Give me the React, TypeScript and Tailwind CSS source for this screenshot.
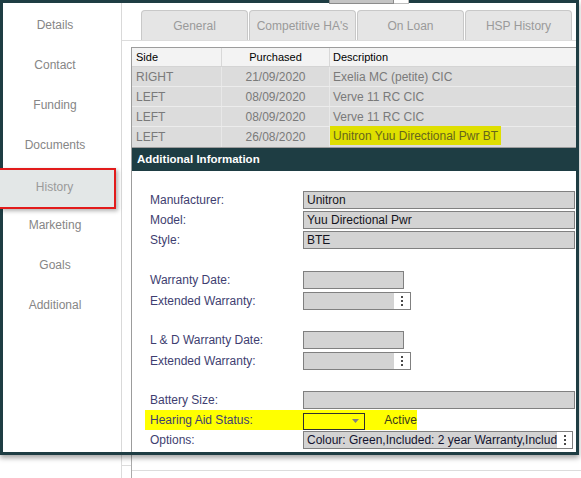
import React from 'react';

const sideItems = ['Details', 'Contact', 'Funding', 'Documents', 'History', 'Marketing', 'Goals', 'Additional'];
const tabs = ['General', "Competitive HA's", 'On Loan', 'HSP History'];

const rows = [
    { side: 'RIGHT', date: '21/09/2020', desc: 'Exelia MC (petite) CIC' },
    { side: 'LEFT', date: '08/09/2020', desc: 'Verve 11 RC CIC' },
    { side: 'LEFT', date: '08/09/2020', desc: 'Verve 11 RC CIC' },
    { side: 'LEFT', date: '26/08/2020', desc: 'Unitron Yuu Directional Pwr BT', hi: true },
];

function Kebab() {
    return (
        <svg width="4" height="12" viewBox="0 0 4 12" className="shrink-0">
            <rect x="1" y="1" width="2" height="2" fill="#4a4a4a" />
            <rect x="1" y="5" width="2" height="2" fill="#4a4a4a" />
            <rect x="1" y="9" width="2" height="2" fill="#4a4a4a" />
        </svg>
    );
}

function Field({ value = '', className = '' }: { value?: string; className?: string }) {
    return (
        <div className={`h-[18px] border border-[#808080] bg-[#d3d3d3] pl-[3px] flex items-center text-[12px] text-[#141420] leading-none overflow-hidden whitespace-nowrap ${className}`}>
            {value}
        </div>
    );
}

function MenuField({ value = '', className = '', grey }: { value?: string; className?: string; grey: string }) {
    return (
        <div className={`h-[18px] border border-[#808080] bg-white flex ${className}`}>
            <div className={`${grey} h-full bg-[#d3d3d3] pl-[3px] flex items-center text-[12px] text-[#141430] leading-none overflow-hidden whitespace-nowrap`}>
                {value}
            </div>
            <div className="flex-1 flex items-center justify-center">
                <Kebab />
            </div>
        </div>
    );
}

function Row({ label, children, className = '' }: { label: string; children: React.ReactNode; className?: string }) {
    return (
        <div className={`h-[20px] flex items-center ${className}`}>
            <div className="w-[153px] text-[12px] text-[#3e3e70]">{label}</div>
            {children}
        </div>
    );
}

export default function App() {
    return (
        <div className="relative w-[581px] h-[478px] bg-white overflow-hidden font-['Liberation_Sans',Arial,sans-serif]">
            <div className="relative z-10 flex w-[579px] h-[455px] border-[3px] border-[#1e3d43] bg-white shadow-[0_3px_5px_rgba(0,0,0,0.35)]">
                {/* sidebar */}
                <div className="w-[119px] border-r border-[#d9d9d9] pt-[2px] flex flex-col">
                    {sideItems.map((item) =>
                        item === 'History' ? (
                            <div
                                key={item}
                                className="relative z-10 -ml-[3px] mt-[3px] -mb-[4px] w-[116px] h-[41px] border-2 border-l-0 border-[#e21b1b] bg-[#e3e7e7] shadow-[2px_2px_4px_rgba(0,0,0,0.3)] flex items-center justify-center pr-[5px] pb-[3px] text-[12px] text-[#9a9a9a]"
                            >
                                {item}
                            </div>
                        ) : (
                            <div key={item} className="w-[104px] h-10 flex items-center justify-center text-[12px] text-[#868686]">
                                {item}
                            </div>
                        )
                    )}
                </div>

                {/* main */}
                <div className="flex-1 flex flex-col min-w-0">
                    <div className="h-[38px] border-b border-[#dcdcdc] pt-[7px] pl-[19px] flex gap-[1px]">
                        {tabs.map((t) => (
                            <div key={t} className="w-[107px] h-[30px] rounded-t-[4px] border border-b-0 border-[#c8c8c8] bg-[#e5e5e5] flex items-center justify-center text-[12px] text-[#9a9a9a]">
                                {t}
                            </div>
                        ))}
                    </div>

                    <div className="flex-1 pl-[9px] pt-[6px] flex flex-col min-h-0">
                        <div className="flex-1 border-l border-t border-[#9c9c9c] flex flex-col">
                            {/* table */}
                            <div className="h-[19px] flex bg-[#f3f3f3] border-b border-[#d4d4d4] text-[11px] text-black">
                                <div className="w-[90px] border-r border-[#d8d8d8] pl-[4px] flex items-center">Side</div>
                                <div className="w-[108px] border-r border-[#d8d8d8] flex items-center justify-center">Purchased</div>
                                <div className="flex-1 pl-[3px] flex items-center">Description</div>
                            </div>
                            {rows.map((r, i) => (
                                <div
                                    key={i}
                                    className={`flex bg-[#dcdcdc] text-[12px] text-[#7a7a7a] border-b ${i === rows.length - 1 ? 'h-[21px] border-[#9c9c9c]' : 'h-[20px] border-[#ececec]'}`}
                                >
                                    <div className="w-[90px] border-r border-[#e8e8e8] pl-[4px] flex items-center">{r.side}</div>
                                    <div className="w-[108px] border-r border-[#e8e8e8] flex items-center justify-center">{r.date}</div>
                                    <div className="flex-1 flex items-center">
                                        {r.hi ? (
                                            <span className="h-[19px] -mt-[3px] px-[3px] bg-[#dfdf00] text-[#66661c] flex items-center">{r.desc}</span>
                                        ) : (
                                            <span className="pl-[3px]">{r.desc}</span>
                                        )}
                                    </div>
                                </div>
                            ))}

                            <div className="h-[23px] bg-[#1e3d43] pl-[5px] flex items-center text-white font-bold text-[11.5px]">
                                Additional Information
                            </div>

                            {/* form */}
                            <div className="flex-1 pl-[18px] pt-[19px]">
                                <Row label="Manufacturer:">
                                    <Field value="Unitron" className="w-[272px]" />
                                </Row>
                                <Row label="Model:">
                                    <Field value="Yuu Directional Pwr" className="w-[272px]" />
                                </Row>
                                <Row label="Style:">
                                    <Field value="BTE" className="w-[272px]" />
                                </Row>

                                <Row label="Warranty Date:" className="mt-[20px]">
                                    <Field className="w-[101px]" />
                                </Row>
                                <Row label="Extended Warranty:" className="mt-[1px]">
                                    <MenuField grey="w-[90px]" className="w-[108px]" />
                                </Row>

                                <Row label="L & D Warranty Date:" className="mt-[19px]">
                                    <Field className="w-[101px]" />
                                </Row>
                                <Row label="Extended Warranty:" className="mt-[1px]">
                                    <MenuField grey="w-[90px]" className="w-[108px]" />
                                </Row>

                                <Row label="Battery Size:" className="mt-[19px]">
                                    <Field className="w-[272px]" />
                                </Row>

                                <div className="h-[20px] -ml-[5px] pl-[5px] w-[272px] bg-[#ffff00] flex items-center">
                                    <div className="w-[153px] text-[12px] text-[#3e3e70]">Hearing Aid Status:</div>
                                    <div className="w-[63px] h-[17px] mt-[2px] border border-[#303030] flex items-center justify-end pr-[5px]">
                                        <svg width="7" height="4" viewBox="0 0 7 4">
                                            <polygon points="0,0 7,0 3.5,4" fill="#808080" />
                                        </svg>
                                    </div>
                                    <div className="ml-[19px] text-[12px] text-[#3a3a1a]">Active</div>
                                </div>

                                <Row label="Options:">
                                    <MenuField
                                        value="Colour: Green,Included: 2 year Warranty,Includ"
                                        grey="w-[253px]"
                                        className="w-[270px]"
                                    />
                                </Row>
                            </div>
                        </div>
                    </div>
                </div>
            </div>

            {/* window behind, below the frame */}
            <div className="flex h-[23px]">
                <div className="w-[122px] border-r border-[#dcdcdc]" />
                <div className="w-[10px] border-r border-[#aaaaaa]">
                    <div className="h-[11px] border-b border-[#dcdcdc]" />
                </div>
                <div className="flex-1">
                    <div className="h-[16px] border-b border-[#dcdcdc]" />
                </div>
            </div>

            {/* bit of a control peeking over the top edge */}
            <div className="absolute z-20 left-[329px] top-0 w-[65px] h-[4px] bg-[#c4c4c4] border-x border-b border-[#8c8c8c]" />
            <div className="absolute z-20 left-[394px] top-0 w-[15px] h-[4px] bg-white border-r border-b border-[#bdbdbd]" />
        </div>
    );
}
